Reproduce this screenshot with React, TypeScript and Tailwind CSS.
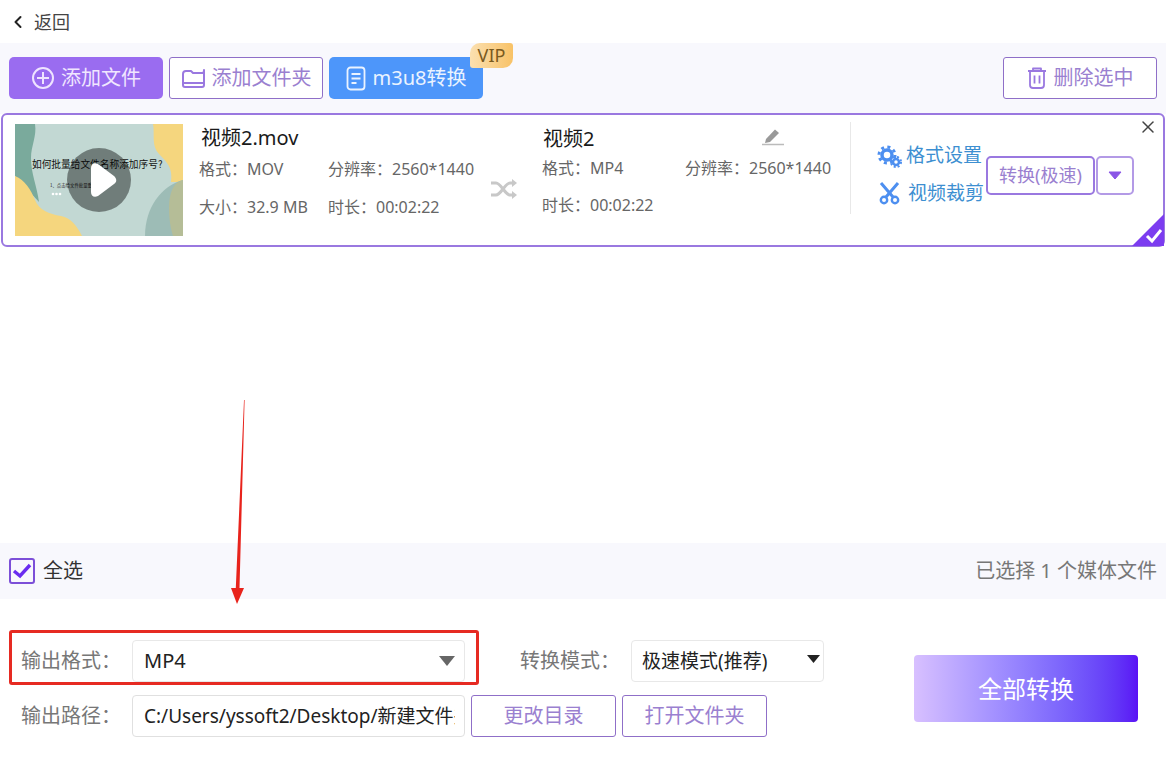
import React from "react";
import { ChevronLeft, X } from "lucide-react";

function Thumb() {
  return (
    <svg viewBox="0 0 168 112" className="w-[168px] h-[112px] shrink-0 block">
      <rect width="168" height="112" fill="#c2d8d3" />
      <path d="M0 0H20C22 12 16 22 16 34C16 50 22 62 24 78L0 52Z" fill="#7aaa9c" />
      <path d="M0 52C10 56 16 66 20 76C24 86 34 90 46 92C56 94 62 102 67 112H0Z" fill="#f5d67e" />
      <path d="M138 0H168V58H156C158 44 152 38 144 30C136 22 140 10 138 0Z" fill="#f5d67e" />
      <path d="M130 112C130 84 146 62 168 56V112Z" fill="#9dbcb6" />
      <path d="M168 56C158 58 154 70 154 84C154 96 156 106 158 112H168Z" fill="#b5bd97" />
      <text x="17" y="44" fontSize="9.7" fill="#111" fontFamily="'Noto Sans CJK SC',sans-serif">如何批量给文件名称添加序号?</text>
      <text x="35" y="63" fontSize="4.4" fill="#222" fontFamily="'Noto Sans CJK SC',sans-serif">1、点击给文件批量重</text>
      <circle cx="38" cy="70" r="1.3" fill="#fff" /><circle cx="41.5" cy="70" r="1.3" fill="#fff" /><circle cx="45" cy="70" r="1.3" fill="#fff" />
      <circle cx="84" cy="56" r="32" fill="#000" fillOpacity="0.42" />
      <path d="M76 44C76 40 79 38 83 40L99 52C102 55 102 58 99 60L83 72C79 74 76 72 76 68Z" fill="#fff" />
    </svg>
  );
}

const Meta = ({ label, value, w }: { label: string; value: string; w: string }) => (
  <div className={`flex whitespace-nowrap ${w}`}>
    <span>{label}</span>
    <span>{value}</span>
  </div>
);

export default function App() {
  return (
    <div className="relative w-[1166px] h-[769px] overflow-hidden bg-white flex flex-col font-['Noto_Sans','Noto_Sans_CJK_SC',sans-serif]">
      {/* back */}
      <div className="h-[43px] shrink-0 flex items-center pl-[8px] text-[18px] text-[#444]">
        <ChevronLeft className="w-[20px] h-[24px] text-[#222]" strokeWidth={2.4} />
        <span className="ml-[6px] leading-none">返回</span>
      </div>

      {/* toolbar */}
      <div className="h-[71px] shrink-0 bg-[#f8f8fd] flex items-start pt-[14px] px-[9px] gap-[6px] text-[20px]">
        <button className="w-[154px] h-[42px] rounded-[5px] bg-[#9a6cf0] text-[#f0e6ff] flex items-center justify-center gap-[6px]">
          <svg width="24" height="24" viewBox="0 0 24 24" fill="none" stroke="#efe4ff" strokeWidth="2">
            <circle cx="12" cy="12" r="10" /><path d="M12 6v12M6 12h12" />
          </svg>
          <span>添加文件</span>
        </button>
        <button className="w-[154px] h-[42px] rounded-[3px] bg-white border border-[#8f6fc8] text-[#9a80d0] flex items-center justify-center gap-[6px]">
          <svg width="25" height="22" viewBox="0 0 25 22" fill="none" stroke="#9a78e0" strokeWidth="2">
            <path d="M2 7c0-2 1-3 3-3h5l2 2h8c2 0 3 0 3-3v15c0 1-1 2-2 2H4c-1 0-2-1-2-2Z" strokeLinejoin="round" />
            <path d="M2 16h21" />
          </svg>
          <span>添加文件夹</span>
        </button>
        <button className="w-[154px] h-[42px] rounded-[5px] bg-[#4d96fa] text-[#eaf3ff] flex items-center justify-center gap-[7px]">
          <svg width="20" height="25" viewBox="0 0 20 25" fill="none" stroke="#eaf3ff" strokeWidth="1.8">
            <rect x="1.5" y="1.5" width="17" height="22" rx="3" /><path d="M5.5 8h9M5.5 12.5h9M5.5 17h5" />
          </svg>
          <span>m3u8转换</span>
        </button>
        <button className="ml-auto w-[154px] h-[42px] rounded-[3px] bg-white border border-[#8f6fc8] text-[#9a80d0] flex items-center justify-center gap-[7px]">
          <svg width="20" height="22" viewBox="0 0 20 22" fill="none" stroke="#9a78e0" strokeWidth="1.8">
            <path d="M1 4h18M6 4V1.5h8V4M3 4v14c0 2 1 3 3 3h8c2 0 3-1 3-3V4M7.5 8.5v8M12.5 8.5v8" strokeLinejoin="round" />
          </svg>
          <span>删除选中</span>
        </button>
      </div>

      {/* card */}
      <div className="relative mx-[1px] h-[134px] shrink-0 -mt-[1px] bg-white border-2 border-[#9a78e0] rounded-[6px] flex items-start pl-[12px] pt-[9px] text-[16px] text-[#666]">
        <Thumb />
        <div className="ml-[16px] w-[291px] shrink-0">
          <div className="h-[28px] pl-[2px] text-[20px] leading-[28px] text-[#1a1a1a]">视频2.mov</div>
          <div className="flex mt-[5px] h-[24px] leading-[24px]">
            <Meta w="w-[129px]" label="格式：" value="MOV" />
            <Meta w="" label="分辨率：" value="2560*1440" />
          </div>
          <div className="flex mt-[14px] h-[24px] leading-[24px]">
            <Meta w="w-[129px]" label="大小：" value="32.9 MB" />
            <Meta w="" label="时长：" value="    00:02:22" />
          </div>
        </div>
        <svg width="28" height="22" viewBox="0 0 28 22" fill="none" stroke="#c8c8c8" strokeWidth="3" className="shrink-0 mt-[54px]">
          <path d="M1 5h5c5 0 9 12 14 12h4M1 17h5c5 0 9-12 14-12h4" />
          <path d="M22 1l5 4-5 4ZM22 13l5 4-5 4Z" fill="#c8c8c8" stroke="none" />
        </svg>
        <div className="ml-[24px] w-[308px] shrink-0">
          <div className="w-[243px] h-[28px] pl-[1px] flex items-center justify-between text-[20px] leading-[28px] text-[#1a1a1a] mt-[1px]">
            <span>视频2</span>
            <svg width="24" height="18" viewBox="0 0 24 18" className="-mt-[4px]">
              <path d="M5 11L14 1.5l4 3.5-9 9-5 1Z" fill="#999" />
              <path d="M1 16.5h22" stroke="#bbb" strokeWidth="1.5" />
            </svg>
          </div>
          <div className="flex mt-[3px] h-[24px] leading-[24px]">
            <Meta w="w-[143px]" label="格式：" value="MP4" />
            <Meta w="" label="分辨率：" value="2560*1440" />
          </div>
          <div className="flex mt-[13px] h-[24px] leading-[24px]">
            <Meta w="" label="时长：" value="00:02:22" />
          </div>
        </div>
        <div className="w-[1px] h-[92px] bg-[#e8e8e8] shrink-0 -mt-[2px]" />
        <div className="ml-[26px] w-[109px] shrink-0 mt-[19px] text-[19px] text-[#3d8fd1]">
          <div className="flex items-center h-[28px] whitespace-nowrap">
            <svg width="26" height="24" viewBox="0 0 26 24" fill="none" stroke="#4d8ff0" className="shrink-0">
              <circle cx="10" cy="10" r="5" strokeWidth="3.5" />
              <circle cx="10" cy="10" r="8" strokeWidth="3" strokeDasharray="3 3.3" />
              <circle cx="19" cy="17" r="3" strokeWidth="2.5" />
              <circle cx="19" cy="17" r="5" strokeWidth="2" strokeDasharray="2 2" />
            </svg>
            <span className="ml-[3px] -mt-[3px]">格式设置</span>
          </div>
          <div className="flex items-center h-[28px] mt-[8px] whitespace-nowrap">
            <svg width="24" height="24" viewBox="0 0 24 24" fill="none" stroke="#4d8ff0" className="shrink-0 ml-[1px]">
              <circle cx="6" cy="19" r="3.2" strokeWidth="2.4" />
              <circle cx="17" cy="19" r="3.2" strokeWidth="2.4" />
              <path d="M8 16L20 2M15 16L3 2" strokeWidth="3" />
            </svg>
            <span className="ml-[6px]">视频裁剪</span>
          </div>
        </div>
        <div className="flex mt-[32px] shrink-0 text-[#9a80d0]">
          <button className="w-[109px] h-[39px] rounded-[5px] border-2 border-[#9a78e0] text-[18px] whitespace-nowrap flex items-center justify-center">转换(极速)</button>
          <button className="ml-[1px] w-[38px] h-[39px] rounded-[5px] border-2 border-[#b39ae6] flex items-center justify-center">
            <svg width="14" height="9" viewBox="0 0 14 9"><path d="M1 1h12L7 8Z" fill="#8a55e6" strokeLinejoin="round" stroke="#8a55e6" /></svg>
          </button>
        </div>
        <X className="absolute right-[5px] top-[2px] w-[20px] h-[20px] text-[#444]" strokeWidth={1.8} />
        <svg width="32" height="32" viewBox="0 0 32 32" className="absolute right-[-1px] bottom-[-1px]">
          <path d="M32 0V32H0Z" fill="#7c3cf0" />
          <path d="M15 22l5 5 9-11" fill="none" stroke="#fff" strokeWidth="3" />
        </svg>
      </div>

      <div className="flex-1" />

      {/* select-all bar */}
      <div className="h-[56px] shrink-0 bg-[#f8f8fd] flex items-center px-[9px] text-[20px]">
        <div className="w-[26px] h-[26px] rounded-[3px] border-2 border-[#7c4fd8] flex items-center justify-center">
          <svg width="20" height="16" viewBox="0 0 20 16" fill="none" stroke="#6a2cf0" strokeWidth="3.4"><path d="M2 8l6 5L18 2" /></svg>
        </div>
        <span className="ml-[8px] text-[#333]">全选</span>
        <span className="ml-auto text-[#777]">已选择 1 个媒体文件</span>
      </div>

      {/* bottom */}
      <div className="h-[170px] shrink-0 flex items-start pt-[41px] pl-[21px] text-[20px] text-[#777]">
        <div className="w-[803px] shrink-0 flex flex-col gap-[13px]">
          <div className="flex items-center h-[42px]">
            <span className="w-[111px] shrink-0 whitespace-nowrap">输出格式：</span>
            <div className="w-[333px] h-[42px] shrink-0 rounded-[4px] border border-[#e8e8e8] bg-white flex items-center justify-between pl-[11px] pr-[9px] text-[#222]">
              <span>MP4</span>
              <svg width="16" height="10" viewBox="0 0 16 10"><path d="M0 0h16L8 10Z" fill="#666" /></svg>
            </div>
            <span className="ml-[55px] w-[111px] shrink-0 whitespace-nowrap">转换模式：</span>
            <div className="w-[193px] h-[42px] shrink-0 rounded-[4px] border border-[#e8e8e8] bg-white flex items-center justify-between pl-[10px] pr-[3px] text-[19px] text-[#222]">
              <span>极速模式(推荐)</span>
              <svg width="13" height="8" viewBox="0 0 13 8" className="-mt-[4px]"><path d="M0 0h13L6.5 8Z" fill="#222" /></svg>
            </div>
          </div>
          <div className="flex items-center h-[42px]">
            <span className="w-[111px] shrink-0 whitespace-nowrap">输出路径：</span>
            <div className="w-[333px] h-[42px] shrink-0 rounded-[4px] border border-[#e0e0e0] bg-white flex items-center pl-[11px] pr-[9px] text-[#222]">
              <span className="block overflow-hidden whitespace-nowrap text-[19px]">C:/Users/yssoft2/Desktop/新建文件夹</span>
            </div>
            <button className="ml-[6px] w-[145px] h-[42px] rounded-[3px] border border-[#8f6fc8] text-[#9a80d0]">更改目录</button>
            <button className="ml-[6px] w-[145px] h-[42px] rounded-[3px] border border-[#8f6fc8] text-[#9a80d0]">打开文件夹</button>
          </div>
        </div>
        <button className="ml-[90px] mt-[15px] w-[224px] h-[67px] shrink-0 rounded-[4px] bg-gradient-to-r from-[#d8c0ff] to-[#5a10f5] text-white text-[24px]">全部转换</button>
      </div>

      {/* VIP badge */}
      <div className="absolute left-[470px] top-[43px] w-[43px] h-[25px] rounded-tl-[10px] rounded-br-[10px] rounded-tr-[3px] rounded-bl-[3px] bg-gradient-to-r from-[#fbe0b0] to-[#f8c266] text-[#7a5a1e] text-[18px] leading-[25px] text-center">VIP</div>

      {/* annotations */}
      <div className="absolute left-[9px] top-[630px] w-[470px] h-[55px] border-[3px] border-[#e62a22] rounded-[3px] pointer-events-none" />
      <svg width="20" height="210" viewBox="0 0 20 210" className="absolute left-[228px] top-[398px] pointer-events-none">
        <path d="M16 2L16.6 2 11.5 190 16 190 9 206 3 190 7.8 190Z" fill="#e8231c" />
      </svg>
    </div>
  );
}
